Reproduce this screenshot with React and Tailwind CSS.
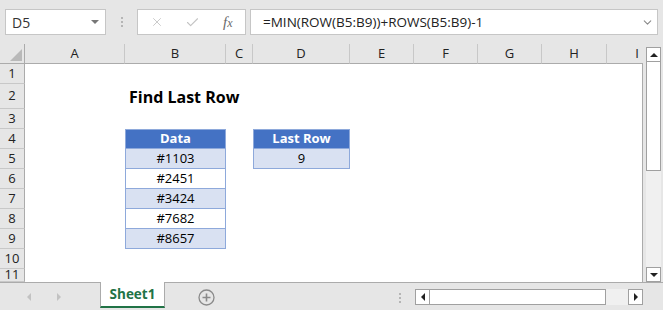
import { Check, X, ChevronDown } from "lucide-react";

const colLetters = ["A", "B", "C", "D", "E", "F", "G", "H", "I"];
const dataRows = ["#1103", "#2451", "#3424", "#7682", "#8657"];

function Cell({ row, col }) {
  // table in column B (col 1) rows 4-9, result table in column D (col 3) rows 4-5
  if (row === 2 && col === 1) {
    return (
      <div className="flex items-center pl-[4px] whitespace-nowrap overflow-visible z-10 text-[16px] font-bold text-black">
        Find Last Row
      </div>
    );
  }
  if (row === 4 && (col === 1 || col === 3)) {
    return (
      <div className="flex items-center justify-center bg-[#4472c4] border border-[#8ea9db] text-white font-bold">
        {col === 1 ? "Data" : "Last Row"}
      </div>
    );
  }
  if (col === 1 && row >= 5 && row <= 9) {
    const shaded = row % 2 === 1;
    return (
      <div
        className={
          "flex items-center justify-center border-x border-b border-[#8ea9db] text-black " +
          (shaded ? "bg-[#d9e1f2]" : "bg-white")
        }
      >
        {dataRows[row - 5]}
      </div>
    );
  }
  if (col === 3 && row === 5) {
    return (
      <div className="flex items-center justify-center border-x border-b border-[#8ea9db] bg-[#d9e1f2] text-black">
        9
      </div>
    );
  }
  return <div className={col === 8 ? "border-r border-[#ababab]" : ""} />;
}

export default function App() {
  const rows = [1, 2, 3, 4, 5, 6, 7, 8, 9, 10, 11];

  return (
    <div
      className="w-[663px] h-[310px] bg-[#e6e6e6] flex flex-col overflow-hidden text-[13px] text-[#222]"
      style={{ fontFamily: '"Open Sans", "Noto Sans", sans-serif' }}
    >
      {/* formula bar */}
      <div className="h-[44px] flex items-start pt-[9px] pl-[5px] shrink-0">
        <div className="w-[101px] h-[26px] bg-white border border-[#c6c6c6] flex items-center justify-between pl-[6px] pr-[6px]">
          <span className="text-[14px] text-[#333]">D5</span>
          <span className="w-0 h-0 border-x-[4px] border-x-transparent border-t-[4px] border-t-[#777]" />
        </div>
        <div className="w-[31px] h-[26px] flex flex-col items-center justify-center gap-[2px]">
          <span className="w-[2px] h-[2px] bg-[#b5b5b5]" />
          <span className="w-[2px] h-[2px] bg-[#b5b5b5]" />
          <span className="w-[2px] h-[2px] bg-[#b5b5b5]" />
        </div>
        <div className="w-[109px] h-[26px] bg-white border border-[#c6c6c6] flex items-center">
          <div className="w-[38px] flex justify-center">
            <X size={14} strokeWidth={1.5} color="#c4c4c4" />
          </div>
          <div className="w-[36px] flex justify-center">
            <Check size={15} strokeWidth={1.8} color="#c4c4c4" />
          </div>
          <div className="w-[35px] flex justify-center">
            <span
              className="italic text-[15px] text-[#6a6a6a] leading-none"
              style={{ fontFamily: '"Liberation Serif", serif' }}
            >
              f<span className="text-[12px]">x</span>
            </span>
          </div>
        </div>
        <div className="ml-[4px] w-[408px] h-[26px] bg-white border border-[#c6c6c6] flex items-center justify-between pl-[12px] pr-[3px]">
          <span className="text-[13.5px] text-[#222]">=MIN(ROW(B5:B9))+ROWS(B5:B9)-1</span>
          <ChevronDown size={13} strokeWidth={2} color="#8a8a8a" />
        </div>
      </div>

      {/* sheet */}
      <div className="flex h-[238px] shrink-0">
        <div className="w-[643px] grid grid-cols-[25px_100px_101px_27px_97px_64px_64px_64px_65px_36px] grid-rows-[20px_20px_25px_20px_20px_20px_20px_20px_20px_20px_20px_13px] bg-white">
          {/* corner */}
          <div className="relative bg-[#e6e6e6] border-r border-b border-[#ababab]">
            <span className="absolute right-[2px] bottom-[2px] w-0 h-0 border-l-[12px] border-l-transparent border-b-[12px] border-b-[#b9b9b9]" />
          </div>
          {colLetters.map((c, i) => (
            <div
              key={c}
              className={
                "bg-[#e6e6e6] border-b border-[#ababab] flex items-center text-[#222] " +
                (i === 8 ? "justify-end pr-[4px]" : "justify-center border-r border-r-[#c8c8c8]")
              }
            >
              {c}
            </div>
          ))}
          {rows.map((r) => (
            <>
              <div
                key={"h" + r}
                className="bg-[#e6e6e6] border-r border-[#ababab] border-b border-b-[#c8c8c8] flex items-center justify-center text-[#222]"
              >
                {r}
              </div>
              {colLetters.map((c, ci) => (
                <Cell key={c + r} row={r} col={ci} />
              ))}
            </>
          ))}
        </div>

        {/* vertical scrollbar */}
        <div className="ml-[3px] mt-[3px] w-[15px] flex flex-col">
          <div className="h-[15px] bg-white border border-[#a0a0a0] flex items-center justify-center">
            <span className="w-0 h-0 border-x-[4px] border-x-transparent border-b-[4px] border-b-[#222]" />
          </div>
          <div className="h-[109px] bg-white border-x border-b border-[#a0a0a0]" />
          <div className="flex-1 bg-[#f0f0f0]" />
          <div className="h-[15px] bg-white border border-[#a0a0a0] flex items-center justify-center">
            <span className="w-0 h-0 border-x-[4px] border-x-transparent border-t-[4px] border-t-[#222]" />
          </div>
        </div>
      </div>

      {/* sheet tabs */}
      <div className="h-[28px] flex items-start shrink-0">
        <div className="w-[100px] h-full border-t border-[#ababab] flex items-center">
          <span className="ml-[27px] w-0 h-0 border-y-[4px] border-y-transparent border-r-[4px] border-r-[#c2c2c2]" />
          <span className="ml-[26px] w-0 h-0 border-y-[4px] border-y-transparent border-l-[4px] border-l-[#c2c2c2]" />
        </div>
        <div className="w-[65px] h-[26px] bg-white border-x border-[#ababab] border-b-2 border-b-[#217346] flex items-center justify-center">
          <span className="font-bold text-[#217346] text-[13.5px]">Sheet1</span>
        </div>
        <div className="flex-1 h-full border-t border-[#ababab] flex items-start">
          <div className="ml-[33px] mt-[6px]">
            <svg width="17" height="17" viewBox="0 0 17 17">
              <circle cx="8.5" cy="8.5" r="7.5" fill="none" stroke="#8a8a8a" strokeWidth="1.3" />
              <path d="M8.5 4.5v8M4.5 8.5h8" stroke="#8a8a8a" strokeWidth="1.6" />
            </svg>
          </div>
          <div className="ml-[184px] mt-[10px] flex flex-col gap-[2px]">
            <span className="w-[2px] h-[2px] bg-[#b5b5b5]" />
            <span className="w-[2px] h-[2px] bg-[#b5b5b5]" />
            <span className="w-[2px] h-[2px] bg-[#b5b5b5]" />
          </div>
          <div className="ml-[14px] mt-[6px] w-[228px] h-[16px] flex">
            <div className="w-[15px] h-full bg-white border border-[#a0a0a0] flex items-center justify-center">
              <span className="w-0 h-0 border-y-[4px] border-y-transparent border-r-[4px] border-r-[#222]" />
            </div>
            <div className="w-[176px] h-full bg-white border-y border-r border-[#a0a0a0]" />
            <div className="flex-1 h-full bg-[#f0f0f0]" />
            <div className="w-[15px] h-full bg-white border border-[#a0a0a0] flex items-center justify-center">
              <span className="w-0 h-0 border-y-[4px] border-y-transparent border-l-[4px] border-l-[#222]" />
            </div>
          </div>
        </div>
      </div>
    </div>
  );
}
